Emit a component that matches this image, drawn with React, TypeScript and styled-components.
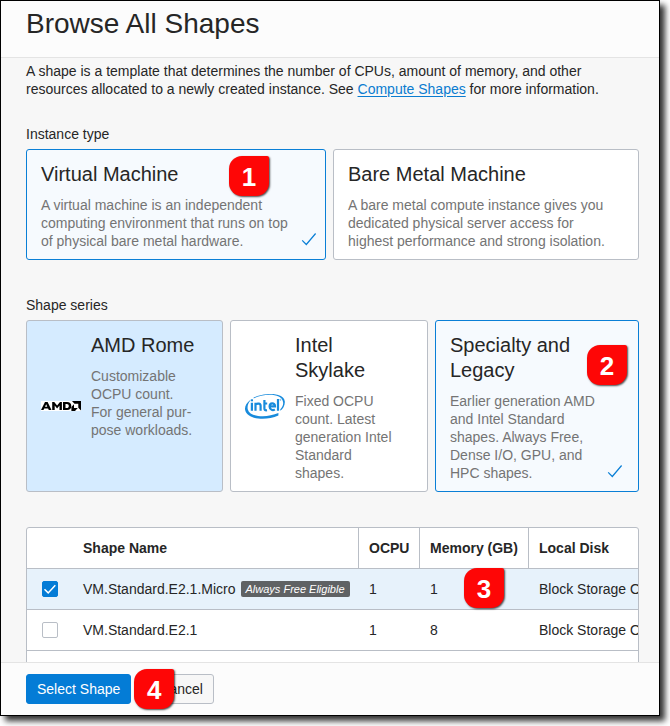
import React, { useState } from "react";
import styled, { createGlobalStyle, css } from "styled-components";

const GlobalStyle = createGlobalStyle`
  *, *::before, *::after { box-sizing: border-box; }
  body {
    margin: 0;
    background: #fff;
    color: #262626;
    font: 14px/18px "Liberation Sans", Arial, sans-serif;
  }
`;

const Page = styled.div`
  display: flex;
  height: 100vh;
  padding: 0 10px 10px 0;
`;

const Dialog = styled.main`
  display: flex;
  flex: 1;
  min-width: 0;
  flex-direction: column;
  border: 1px solid #000;
  background: #f7f7f7;
  box-shadow: 5px 5px 6px rgba(0, 0, 0, 0.8);
`;

const Header = styled.header`
  flex: none;
  padding: 6px 25px 16px;
  border-bottom: 1px solid #e4e4e4;
  background: #fcfcfc;
`;

const Title = styled.h1`
  margin: 0;
  font-size: 28px;
  font-weight: 400;
  line-height: 34px;
`;

const Body = styled.div`
  flex: 1;
  min-height: 0;
  overflow: hidden;
  padding: 4px 20px 0 25px;
`;

const Intro = styled.p`
  margin: 0 0 27px;
`;

const Link = styled.a`
  color: #0a7cd0;
  text-decoration: underline;
  text-underline-offset: 2px;
`;

const Field = styled.fieldset`
  min-width: 0;
  margin: 0 0 36px;
  padding: 0;
  border: 0;

  & + & { margin-bottom: 35px; }
`;

const Legend = styled.legend`
  margin-bottom: 6px;
  padding: 0;
`;

const CardGrid = styled.div<{ $columns: string }>`
  display: grid;
  grid-template-columns: ${(p) => p.$columns};
  gap: 7px;
`;

const Card = styled.label<{ $checked: boolean; $hovered?: boolean }>`
  position: relative;
  display: flex;
  align-items: center;
  gap: 10px;
  padding: 9px 14px;
  border: 1px solid ${(p) => (p.$checked ? "#0a7fd6" : "#b9bec6")};
  border-radius: 3px;
  background: ${(p) => (p.$checked ? "#f6fafe" : p.$hovered ? "#d5ebff" : "#fff")};
  cursor: pointer;
`;

const CardRadio = styled.input`
  position: absolute;
  inset: 0;
  margin: 0;
  opacity: 0;
  cursor: pointer;
`;

const CardText = styled.span<{ $inset?: number }>`
  display: flex;
  flex: 1;
  flex-direction: column;
  align-self: flex-start;
  gap: 9px;
  padding-top: 3px;
  padding-right: ${(p) => p.$inset ?? 0}px;
`;

const CardTitle = styled.span`
  font-size: 20px;
  line-height: 25px;
`;

const CardDescription = styled.span`
  color: #747474;
`;

const CardTick = styled.svg<{ $right: number }>`
  position: absolute;
  right: ${(p) => p.$right}px;
  bottom: 12px;
`;

const Logo = styled.svg`
  flex: none;
  display: block;
`;

const TableFrame = styled.div`
  overflow: hidden;
  border: 1px solid #b9bec6;
  border-radius: 3px;
  background: #fff;
`;

const Table = styled.table`
  width: 760px;
  table-layout: fixed;
  border-collapse: separate;
  border-spacing: 0;
`;

const Col = styled.col<{ $width?: number }>`
  width: ${(p) => (p.$width ? `${p.$width}px` : "auto")};
`;

const cell = css`
  height: 41px;
  padding: 0 10px;
  border-bottom: 1px solid #b9bec6;
  text-align: left;
  white-space: nowrap;
`;

const HeadCell = styled.th<{ $divided?: boolean }>`
  ${cell}
  border-left: ${(p) => (p.$divided ? "1px solid #b9bec6" : "0")};
  font-weight: 700;
`;

const Row = styled.tr<{ $selected: boolean }>`
  background: ${(p) => (p.$selected ? "#e7f2fb" : "#fff")};
`;

const Cell = styled.td<{ $lead?: boolean }>`
  ${cell}
  position: relative;
  padding-left: ${(p) => (p.$lead ? 15 : 11)}px;
`;

const NameCell = styled(Cell)`
  padding-left: 10px;
`;

const NameLine = styled.label`
  display: flex;
  align-items: center;
  gap: 5px;
`;

const Tag = styled.span`
  padding: 0 5px;
  border-radius: 2px;
  background: #5f6264;
  color: #fff;
  font-size: 11px;
  font-style: italic;
  line-height: 16px;
`;

const Tick = styled.input`
  display: block;
  width: 16px;
  height: 16px;
  margin: 0;
  appearance: none;
  border: 1px solid #b9bec6;
  border-radius: 2px;
  background: #fff;
  cursor: pointer;
`;

const TickBox = styled.span<{ $on: boolean }>`
  display: grid;
  width: 16px;
  height: 16px;

  & > * { grid-area: 1 / 1; pointer-events: none; }
  & > ${Tick} {
    pointer-events: auto;
    ${(p) => p.$on && "border-color: #047cd6; background: #047cd6;"}
  }
`;

const Footer = styled.footer`
  flex: none;
  display: flex;
  gap: 17px;
  padding: 11px 25px;
  border-top: 1px solid #e4e4e4;
  background: #fcfcfc;
`;

const Button = styled.button<{ $primary?: boolean }>`
  height: 30px;
  padding: 0 10px;
  border: 1px solid ${(p) => (p.$primary ? "#047cd6" : "#b9bec6")};
  border-radius: 3px;
  background: ${(p) => (p.$primary ? "#047cd6" : "#f7f7f7")};
  color: ${(p) => (p.$primary ? "#fff" : "#262626")};
  font: inherit;
  cursor: pointer;
`;

const Anchor = styled.div`
  position: relative;
`;

const Callout = styled.span<{ $top: number; $left?: number; $right?: number }>`
  position: absolute;
  z-index: 1;
  top: ${(p) => p.$top}px;
  ${(p) => p.$left !== undefined && `left: ${p.$left}px;`}
  ${(p) => p.$right !== undefined && `right: ${p.$right}px;`}
  width: 40px;
  height: 40px;
  border-radius: 13px 2px 13px 13px;
  background: #fe0606;
  box-shadow: 1px 1px 2px rgba(0, 0, 0, 0.7);
  color: #fff;
  font-size: 26px;
  font-weight: 700;
  line-height: 42px;
  text-align: center;
  pointer-events: none;
`;

function AmdLogo() {
  return (
    <Logo width="40" height="10" viewBox="0 0 40 10" role="img" aria-label="AMD">
      <rect width="40" height="10" fill="#fff" />
      <path d="M0 9 4 1h2.600L10.500 9H7.800l-.7-1.500H3.200L2.500 9zM4 5.800h2.300L5.200 3.300z" fillRule="evenodd" />
      <path d="M11.200 9V1h2l2.900 3.500L19 1h1.900v8h-2.400V4.600l-2.400 2.800-2.400-2.800V9z" />
      <path d="M22 1h4c2.600 0 4.300 1.500 4.300 4S28.800 9 26 9h-4zm2.500 1.900v4.200h1.200c1.400 0 2.100-.8 2.100-2.100s-.7-2.100-2.100-2.100z" fillRule="evenodd" />
      <path d="M31 0h9v9.400l-2.700-2.600V2.700h-3.800zM33 3.300v3.700h3.800L34 9.900h-3.600V6z" />
    </Logo>
  );
}

function IntelLogo() {
  return (
    <Logo width="40" height="27" viewBox="0 0 40 27" role="img" aria-label="intel" fill="none" stroke="#188bdc">
      <path fill="#188bdc" stroke="none" d="M8.600 4.600C17 .2 38.800-1.800 39.800 8.400c.3 4-1.800 7.200-4.500 9.300v-1.500c1.800-1.800 3.200-4.200 2.800-7C37-.4 18.200.3 8.800 5.400zM5.200 7C1.500 9.800-.7 13.600.2 17.200c2 9 19.800 11.200 33.200 5.400v-2.500c-11.500 5-28.300 4.300-30.600-3.700C2.100 13.500 3 10.300 5.200 7.800z" />
      <g strokeWidth="2.200">
        <path d="M6.900 9.700v8.100M10.500 17.800V9.700M10.500 11.500c1.600-1.300 5.100-1.400 5.100 1.200v5.100M19.400 7v8.500c0 1.500.8 2 2.600 1.700M19.400 10.500h2.800" />
        <path d="M25 13.300h5c.1-3.900-5.500-3.800-5.400.3.100 3.600 3.400 4.100 5.200 2.700M33 6v11.800" />
      </g>
      <path strokeWidth="2" d="M5.800 7.300H8" />
      <circle cx="35.400" cy="6.800" r=".6" strokeWidth=".5" />
    </Logo>
  );
}

function CheckIcon({ right }: { right: number }) {
  return (
    <CardTick $right={right} width="16" height="16" viewBox="0 0 16 16" fill="none" stroke="#0a7fd6" strokeWidth="1.200" aria-hidden="true">
      <path d="M1.200 9.400 5.300 13.500 14.600 2.500" />
    </CardTick>
  );
}

const series = [
  {
    id: "amd",
    title: "AMD Rome",
    logo: <AmdLogo />,
    inset: 6,
    text: (
      <>
        Customizable OCPU count.
        <br />
        For general pur&shy;pose workloads.
      </>
    ),
  },
  { id: "intel", title: "Intel Skylake", logo: <IntelLogo />, inset: 16, text: "Fixed OCPU count. Latest generation Intel Standard shapes." },
  { id: "legacy", title: "Specialty and Legacy", inset: 24, text: "Earlier generation AMD and Intel Standard shapes. Always Free, Dense I/O, GPU, and HPC shapes." },
];

const instances = [
  { id: "vm", title: "Virtual Machine", inset: 16, text: "A virtual machine is an independent computing environment that runs on top of physical bare metal hardware." },
  { id: "bm", title: "Bare Metal Machine", inset: 12, text: "A bare metal compute instance gives you dedicated physical server access for highest performance and strong isolation." },
];

const shapes = [
  { name: "VM.Standard.E2.1.Micro", free: true, ocpu: 1, memory: 1, step: 3 },
  { name: "VM.Standard.E2.1", ocpu: 1, memory: 8 },
  { name: "VM.Standard.E2.2", ocpu: 2, memory: 16 },
];

export default function App() {
  const [instance, setInstance] = useState("vm");
  const [family, setFamily] = useState("legacy");
  const [selected, setSelected] = useState("VM.Standard.E2.1.Micro");

  return (
    <Page>
      <GlobalStyle />
      <Dialog>
        <Header>
          <Title>Browse All Shapes</Title>
        </Header>
        <Body>
          <Intro>
            A shape is a template that determines the number of CPUs, amount of memory, and other
            <br />
            resources allocated to a newly created instance. See <Link href="#shapes">Compute Shapes</Link> for more
            information.
          </Intro>

          <Field>
            <Legend>Instance type</Legend>
            <CardGrid $columns="300fr 306fr">
              {instances.map((item) => (
                <Card key={item.id} $checked={instance === item.id}>
                  <CardRadio type="radio" name="instance" checked={instance === item.id} onChange={() => setInstance(item.id)} />
                  <CardText $inset={item.inset}>
                    <CardTitle>{item.title}</CardTitle>
                    <CardDescription>{item.text}</CardDescription>
                  </CardText>
                  {instance === item.id && <CheckIcon right={8} />}
                  {item.id === "vm" && <Callout $top={6} $right={56}>1</Callout>}
                </Card>
              ))}
            </CardGrid>
          </Field>

          <Field>
            <Legend>Shape series</Legend>
            <CardGrid $columns="197fr 198fr 204fr">
              {series.map((item) => (
                <Card key={item.id} $checked={family === item.id} $hovered={item.id === "amd"}>
                  <CardRadio type="radio" name="series" checked={family === item.id} onChange={() => setFamily(item.id)} />
                  {item.logo}
                  <CardText $inset={item.inset}>
                    <CardTitle>{item.title}</CardTitle>
                    <CardDescription>{item.text}</CardDescription>
                  </CardText>
                  {family === item.id && <CheckIcon right={15} />}
                  {item.id === "legacy" && <Callout $top={24} $right={11}>2</Callout>}
                </Card>
              ))}
            </CardGrid>
          </Field>

          <TableFrame>
            <Table>
              <colgroup>
                <Col $width={46} />
                <Col $width={285} />
                <Col $width={61} />
                <Col $width={109} />
                <Col />
              </colgroup>
              <thead>
                <tr>
                  <HeadCell aria-label="Selected" />
                  <HeadCell>Shape Name</HeadCell>
                  <HeadCell $divided>OCPU</HeadCell>
                  <HeadCell $divided>Memory (GB)</HeadCell>
                  <HeadCell $divided>Local Disk</HeadCell>
                </tr>
              </thead>
              <tbody>
                {shapes.map((shape) => {
                  const on = selected === shape.name;
                  return (
                    <Row key={shape.name} $selected={on}>
                      <Cell $lead>
                        <TickBox $on={on}>
                          <Tick id={shape.name} type="checkbox" checked={on} onChange={() => setSelected(on ? "" : shape.name)} />
                          {on && (
                            <svg width="16" height="16" viewBox="0 0 16 16" fill="none" stroke="#fff" strokeWidth="1.500" aria-hidden="true">
                              <path d="M2.500 8.200 6.200 11.900 13.300 4.300" />
                            </svg>
                          )}
                        </TickBox>
                      </Cell>
                      <NameCell>
                        <NameLine htmlFor={shape.name}>
                          {shape.name}
                          {shape.free && <Tag>Always Free Eligible</Tag>}
                        </NameLine>
                      </NameCell>
                      <Cell>{shape.ocpu}</Cell>
                      <Cell>
                        {shape.memory}
                        {shape.step && <Callout $top={-1} $left={45}>{shape.step}</Callout>}
                      </Cell>
                      <Cell>Block Storage Only</Cell>
                    </Row>
                  );
                })}
              </tbody>
            </Table>
          </TableFrame>
        </Body>
        <Footer>
          <Button type="button" $primary>
            Select Shape
          </Button>
          <Anchor>
            <Button type="button">Cancel</Button>
            <Callout $top={-5} $left={-14}>4</Callout>
          </Anchor>
        </Footer>
      </Dialog>
    </Page>
  );
}
